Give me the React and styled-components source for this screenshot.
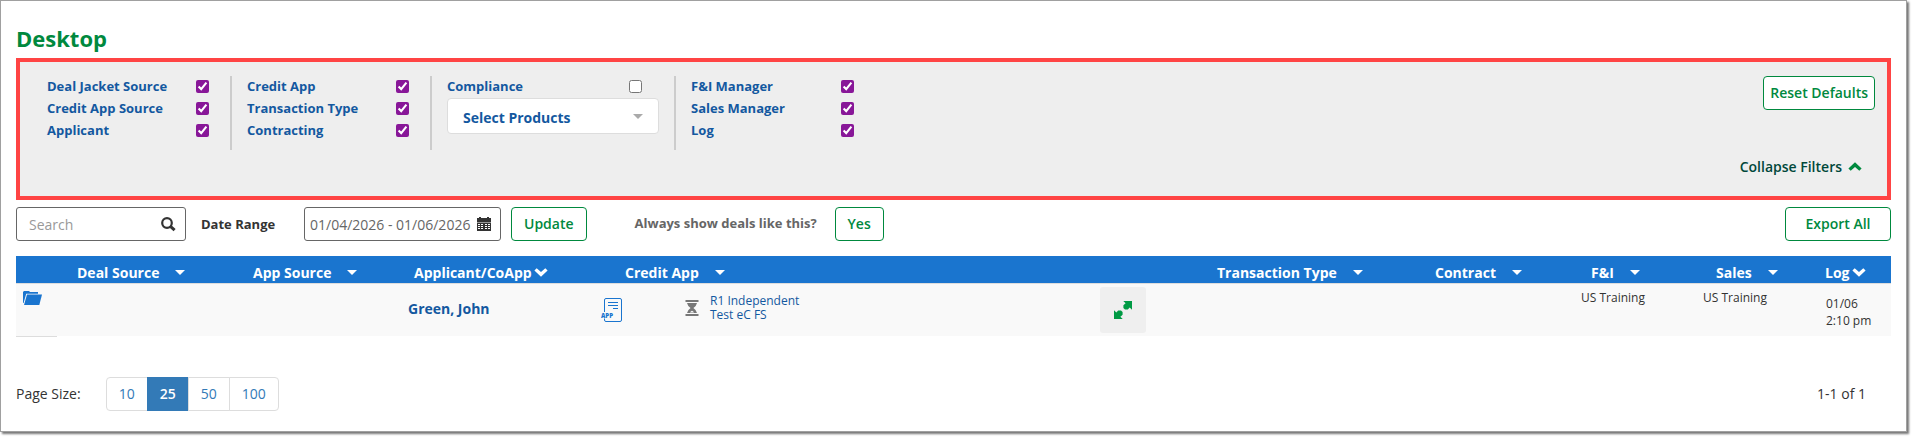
import React, { useState } from 'react';
import styled, { createGlobalStyle, css } from 'styled-components';

const filterGroups = [
  { items: ['Deal Jacket Source', 'Credit App Source', 'Applicant'] },
  { items: ['Credit App', 'Transaction Type', 'Contracting'] },
  { items: ['Compliance'], products: true, wide: true },
  { items: ['F&I Manager', 'Sales Manager', 'Log'] },
];

const columns = [
  { name: '', width: 41 },
  { name: 'Deal Source', width: 176, indent: 20 },
  { name: 'App Source', width: 161, indent: 20 },
  { name: 'Applicant/CoApp', width: 191, indent: 20, sorted: true },
  { name: 'Credit App', indent: 40 },
  { name: 'Transaction Type', width: 218, indent: 20 },
  { name: 'Contract', width: 156, indent: 20 },
  { name: 'F&I', width: 125, indent: 20 },
  { name: 'Sales', width: 109, indent: 20 },
  { name: 'Log', width: 86, indent: 20, sorted: true },
];

const pageSizes = [10, 25, 50, 100];

const Caret = ({ size = 10 }) => (
  <svg width={size} height={size / 2} viewBox="0 0 10 5" fill="currentColor" aria-hidden="true">
    <path d="M0 0h10L5 5z" />
  </svg>
);

const Chevron = ({ up }) => (
  <svg width="14" height="9" viewBox="0 0 14 9" fill="currentColor" aria-hidden="true">
    <path d={up ? 'M0.4 6.4 7 0.2l6.6 6.2L11.3 8.8 7 4.9 2.7 8.8z' : 'M0.4 2.6 2.7 0.2 7 4.1 11.3 0.2l2.3 2.4L7 8.8z'} />
  </svg>
);

const SearchIcon = () => (
  <svg width="15" height="15" viewBox="0 0 15 15" fill="none" stroke="currentColor" aria-hidden="true">
    <circle cx="6" cy="6" r="4.8" strokeWidth="2.2" />
    <path d="M9.4 9.4 13.6 13.2" strokeWidth="3" />
  </svg>
);

const CalendarIcon = () => (
  <svg width="14" height="14" viewBox="0 0 14 14" fill="currentColor" aria-hidden="true">
    <path d="M0 1h2V0h2v1h6V0h2v1h2v4H0z" />
    <path fillRule="evenodd" d="M0 5.500h14V14H0zM1 7v1h2V7zm3 0v1h2V7zm4 0v1h2V7zm3 0v1h2V7zM1 9v1h2V9zm3 0v1h2V9zm4 0v1h2V9zm3 0v1h2V9zM1 11v1h2v-1zm3 0v1h2v-1zm4 0v1h2v-1zm3 0v1h2v-1z" />
  </svg>
);

const FolderIcon = () => (
  <svg width="19" height="14" viewBox="0 0 19 14" fill="currentColor" aria-hidden="true">
    <path d="M0 12V1l1-1h5l1 1h8v1.7H3.2L0.6 12z" />
    <path d="M4 3.5h15L16.3 14H1z" />
  </svg>
);

const AppDocIcon = () => (
  <svg width="22" height="24" viewBox="0 0 22 24" fill="none" stroke="currentColor" aria-hidden="true">
    <path d="M3.5 14V2q0-1.500 1.500-1.500h14q1.500 0 1.500 1.500v20q0 1.500-1.500 1.500h-14q-1.500 0-1.500-1.500v-1.500" />
    <path d="M7 4.500h10M7 7.500h10M12 10.500h5" />
    <text x="0" y="19.500" fill="currentColor" stroke="none" fontSize="6" fontWeight="800" fontFamily="Open Sans, sans-serif">APP</text>
  </svg>
);

const HourglassIcon = () => (
  <svg width="14" height="16" viewBox="0 0 14 16" fill="currentColor" aria-hidden="true">
    <path d="M0.500 0h13v2h-13zM0.500 14h13v2h-13z" />
    <path d="M2 3h10q-.6 3-3.600 5 3 2 3.600 5h-10q.6-3 3.600-5-3-2-3.600-5z" />
    <path d="M5 12.600q.5-1.200 2-1.800 1.500.6 2 1.800z" fill="#f9f9f9" />
  </svg>
);

const ExpandIcon = () => (
  <svg width="18" height="18" viewBox="0 0 18 18" fill="currentColor" aria-hidden="true">
    <path d="M9.300 0H18v8.700l-2.300-2.300-1.900 2.200H11L9.400 7V4.200l2.200-1.900z" />
    <path d="M8.700 18H0V9.300l2.300 2.300 1.900-2.200H7L8.600 11v2.800l-2.200 1.900z" />
  </svg>
);

const FilterItem = ({ name, defaultChecked }) => (
  <FilterLabel>
    {name}
    <input type="checkbox" defaultChecked={defaultChecked} />
  </FilterLabel>
);

const App = () => {
  const [collapsed, setCollapsed] = useState(false);
  const [pageSize, setPageSize] = useState(25);

  return (
    <>
      <GlobalStyle />
      <Frame>
        <Title>Desktop</Title>

        <FilterPanel>
          <FilterGroups>
            {!collapsed && filterGroups.map((group) => (
              <FilterGroup key={group.items[0]} $wide={group.wide}>
                {group.items.map((name) => (
                  <FilterItem key={name} name={name} defaultChecked={!group.products} />
                ))}
                {group.products && (
                  <SelectWrapper>
                    <ProductSelect aria-label="Select Products">
                      <option>Select Products</option>
                    </ProductSelect>
                    <SelectCaret><Caret /></SelectCaret>
                  </SelectWrapper>
                )}
              </FilterGroup>
            ))}
          </FilterGroups>
          <FilterActions>
            <Button $tight>Reset Defaults</Button>
            <CollapseButton onClick={() => setCollapsed(!collapsed)}>
              {collapsed ? 'Expand' : 'Collapse'} Filters
              <Chevron up={!collapsed} />
            </CollapseButton>
          </FilterActions>
        </FilterPanel>

        <Toolbar>
          <SearchField>
            <input type="text" placeholder="Search" aria-label="Search" />
            <SearchIcon />
          </SearchField>
          <DateLabel htmlFor="date-range">Date Range</DateLabel>
          <DateField>
            <input id="date-range" type="text" defaultValue="01/04/2026 - 01/06/2026" />
            <CalendarIcon />
          </DateField>
          <Button>Update</Button>
          <Question>Always show deals like this?</Question>
          <Button>Yes</Button>
          <ExportButton>Export All</ExportButton>
        </Toolbar>

        <DealTable>
          <colgroup>
            {columns.map((col) => <Col key={col.name} $width={col.width} />)}
          </colgroup>
          <thead>
            <tr>
              {columns.map((col) => (
                <HeadCell key={col.name} $indent={col.indent}>
                  {col.name && (
                    <SortButton $sorted={col.sorted}>
                      {col.name}
                      {col.sorted ? <Chevron /> : <Caret />}
                    </SortButton>
                  )}
                </HeadCell>
              ))}
            </tr>
          </thead>
          <tbody>
            <tr>
              <FolderCell><a href="#" aria-label="Open deal"><FolderIcon /></a></FolderCell>
              <Cell />
              <Cell />
              <Cell $indent={14} $middle>
                <ApplicantLink href="#">Green, John</ApplicantLink>
              </Cell>
              <Cell $indent={16} $middle>
                <CreditApp>
                  <AppLink href="#" aria-label="Application"><AppDocIcon /></AppLink>
                  <Lender>
                    <HourglassIcon />
                    <a href="#">R1 Independent<br />Test eC FS</a>
                  </Lender>
                  <ExpandButton aria-label="Expand"><ExpandIcon /></ExpandButton>
                </CreditApp>
              </Cell>
              <Cell />
              <Cell />
              <Cell $indent={10}>US Training</Cell>
              <Cell $indent={7}>US Training</Cell>
              <Cell $indent={21}><LogTime>01/06<br />2:10 pm</LogTime></Cell>
            </tr>
          </tbody>
        </DealTable>

        <Footer>
          <span>Page Size:</span>
          <Pager>
            {pageSizes.map((size) => (
              <PageButton key={size} $active={size === pageSize} onClick={() => setPageSize(size)}>
                {size}
              </PageButton>
            ))}
          </Pager>
          <Total>1-1 of 1</Total>
        </Footer>
      </Frame>
    </>
  );
};

export default App;

const GlobalStyle = createGlobalStyle`
  * {
    box-sizing: border-box;
  }
  body {
    margin: 0;
    background: #fff;
    color: #333;
    font-family: 'Open Sans', sans-serif;
    font-size: 14px;
  }
  button, input, select {
    font-family: inherit;
    font-size: inherit;
  }
  button {
    cursor: pointer;
  }
  a {
    color: #1358a0;
    text-decoration: none;
  }
  svg {
    display: block;
    flex-shrink: 0;
  }
`;

const Frame = styled.main`
  margin: 0 7px 7px 0;
  padding: 22px 15px 20px;
  border: 1px solid #a0a0a0;
  box-shadow: 2px 2px 2px #777;
`;

const Title = styled.h1`
  margin: 0 0 5px;
  font-size: 22px;
  line-height: 30px;
  font-weight: 700;
  color: #00893e;
`;

const FilterPanel = styled.section`
  display: flex;
  justify-content: space-between;
  min-height: 142px;
  padding: 14px 12px 14px 27px;
  background: #eee;
  border: 4px solid #ff4444;
`;

const FilterGroups = styled.div`
  display: flex;
  align-items: flex-start;
`;

const FilterGroup = styled.div`
  width: ${({ $wide }) => ($wide ? 244 : 200)}px;
  height: 74px;
  padding-right: ${({ $wide }) => ($wide ? 32 : 36)}px;
  background: linear-gradient(#ccc, #ccc) no-repeat right 15px top / 2px 100%;

  &:last-child {
    width: 165px;
    padding-right: 0;
    background: none;
  }
`;

const FilterLabel = styled.label`
  display: flex;
  justify-content: space-between;
  align-items: center;
  height: 22px;
  padding-bottom: 2px;
  font-size: 13px;
  font-weight: 700;
  color: #1358a0;

  input {
    width: 13px;
    height: 13px;
    margin: 0 2px 0 0;
    accent-color: #881798;
  }
  &:only-of-type input {
    margin-right: 17px;
  }
`;

const SelectWrapper = styled.div`
  position: relative;
`;

const ProductSelect = styled.select`
  appearance: none;
  width: 100%;
  height: 36px;
  padding: 2px 15px 0;
  border: 1px solid #ddd;
  border-radius: 4px;
  background: #fff;
  color: #1358a0;
  font-weight: 700;
`;

const SelectCaret = styled.span`
  position: absolute;
  top: 16px;
  right: 16px;
  color: #aaa;
  pointer-events: none;
`;

const FilterActions = styled.div`
  display: flex;
  flex-direction: column;
  align-items: flex-end;
  justify-content: space-between;
`;

const Button = styled.button`
  height: 34px;
  padding: 0 ${({ $tight }) => ($tight ? 6 : 12)}px 2px;
  border: 1px solid #00893e;
  border-radius: 4px;
  background: #fff;
  color: #00893e;
  font-weight: 600;
`;

const ExportButton = styled(Button)`
  width: 106px;
  margin-left: auto;
`;

const CollapseButton = styled.button`
  display: flex;
  align-items: center;
  gap: 6px;
  height: 30px;
  padding: 0 13px 2px 0;
  border: 0;
  background: none;
  color: #00483a;
  font-weight: 600;

  svg {
    color: #00893e;
  }
`;

const Toolbar = styled.div`
  display: flex;
  align-items: center;
  margin: 7px 0 15px;
`;

const Field = styled.div`
  display: flex;
  align-items: center;
  height: 34px;
  border: 1px solid #666;
  border-radius: 3px;

  input {
    flex: 1;
    min-width: 0;
    padding: 0;
    border: 0;
    outline: 0;
    background: none;
    color: #666;
  }
  input::placeholder {
    color: #999;
  }
`;

const SearchField = styled(Field)`
  width: 170px;
  padding: 0 9px 0 12px;
`;

const DateLabel = styled.label`
  width: 118px;
  padding-left: 15px;
  font-size: 13px;
  font-weight: 700;
`;

const DateField = styled(Field)`
  width: 197px;
  margin-right: 10px;
  padding: 0 9px 0 5px;
`;

const Question = styled.span`
  width: 200px;
  margin-left: 48px;
  padding-bottom: 2px;
  font-size: 13px;
  font-weight: 700;
  color: #666;
`;

const DealTable = styled.table`
  width: 100%;
  table-layout: fixed;
  border-collapse: collapse;
`;

const Col = styled.col`
  ${({ $width }) => $width && css`width: ${$width}px;`}
`;

const HeadCell = styled.th`
  height: 27px;
  padding: 6px 0 0 ${({ $indent }) => $indent || 0}px;
  background: #1a75cf;
  text-align: left;
`;

const SortButton = styled.button`
  display: flex;
  align-items: center;
  gap: ${({ $sorted }) => ($sorted ? 2 : 16)}px;
  height: 20px;
  padding: 0;
  border: 0;
  background: none;
  color: #fff;
  font-weight: 700;
  white-space: nowrap;
`;

const Cell = styled.td`
  height: 53px;
  padding: 0 0 0 ${({ $indent }) => $indent || 0}px;
  border-top: 1px solid #ddd;
  background: #f9f9f9;
  font-size: 12px;
  line-height: 28px;
  vertical-align: ${({ $middle }) => ($middle ? 'middle' : 'top')};
`;

const FolderCell = styled(Cell)`
  padding: 7px 0 0 7px;
  border-bottom: 1px solid #ddd;

  a {
    color: #1a75cf;
  }
`;

const ApplicantLink = styled.a`
  font-size: 14px;
  font-weight: 700;
`;

const CreditApp = styled.div`
  display: flex;
  align-items: center;
`;

const AppLink = styled.a`
  color: #1a75cf;
`;

const Lender = styled.div`
  display: flex;
  flex: 1;
  align-items: center;
  gap: 11px;
  margin-left: 62px;
  padding-bottom: 4px;
  line-height: 14px;
  color: #777;
`;

const ExpandButton = styled.button`
  display: grid;
  place-items: center;
  width: 46px;
  height: 46px;
  margin-right: 51px;
  padding: 0;
  border: 0;
  border-radius: 3px;
  background: #efefef;
  color: #009a44;
`;

const LogTime = styled.div`
  padding-top: 11px;
  line-height: 17px;
`;

const Footer = styled.footer`
  display: flex;
  align-items: center;
  margin-top: 40px;
`;

const Pager = styled.div`
  display: flex;
  margin-left: 25px;
`;

const PageButton = styled.button`
  height: 34px;
  margin-left: -1px;
  padding: 0 12px;
  border: 1px solid ${({ $active }) => ($active ? '#337ab7' : '#ddd')};
  background: ${({ $active }) => ($active ? '#337ab7' : '#fff')};
  color: ${({ $active }) => ($active ? '#fff' : '#337ab7')};
  font-weight: ${({ $active }) => ($active ? 600 : 400)};

  &:first-child {
    margin-left: 0;
    border-radius: 4px 0 0 4px;
  }
  &:last-child {
    border-radius: 0 4px 4px 0;
  }
`;

const Total = styled.span`
  margin-left: auto;
  padding-right: 25px;
`;
